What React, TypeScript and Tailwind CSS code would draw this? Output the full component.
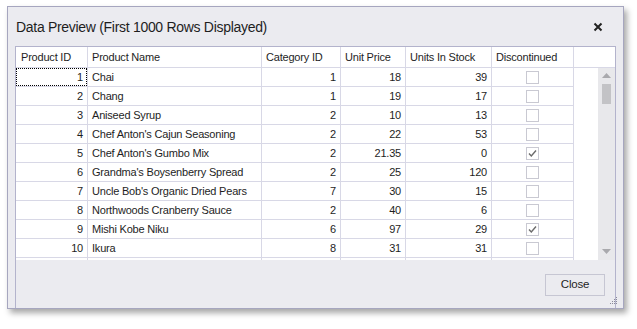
import React from "react";

type Row = { id: number; name: string; cat: number; price: string; stock: number; disc: boolean };

const rows: Row[] = [
  { id: 1, name: "Chai", cat: 1, price: "18", stock: 39, disc: false },
  { id: 2, name: "Chang", cat: 1, price: "19", stock: 17, disc: false },
  { id: 3, name: "Aniseed Syrup", cat: 2, price: "10", stock: 13, disc: false },
  { id: 4, name: "Chef Anton's Cajun Seasoning", cat: 2, price: "22", stock: 53, disc: false },
  { id: 5, name: "Chef Anton's Gumbo Mix", cat: 2, price: "21.35", stock: 0, disc: true },
  { id: 6, name: "Grandma's Boysenberry Spread", cat: 2, price: "25", stock: 120, disc: false },
  { id: 7, name: "Uncle Bob's Organic Dried Pears", cat: 7, price: "30", stock: 15, disc: false },
  { id: 8, name: "Northwoods Cranberry Sauce", cat: 2, price: "40", stock: 6, disc: false },
  { id: 9, name: "Mishi Kobe Niku", cat: 6, price: "97", stock: 29, disc: true },
  { id: 10, name: "Ikura", cat: 8, price: "31", stock: 31, disc: false },
];

function Check({ checked }: { checked: boolean }) {
  return (
    <div className="w-[13px] h-[13px] border border-[#c9c9d2] bg-white flex items-center justify-center">
      {checked && (
        <svg width="11" height="11" viewBox="0 0 11 11">
          <path d="M2 5.5 L4.3 8 L9 2.5" fill="none" stroke="#6b6b6b" strokeWidth="1.4" />
        </svg>
      )}
    </div>
  );
}

export default function App() {
  const cell = "h-full border-r border-[#d8d8e6] flex items-center shrink-0";
  return (
    <div
      className="w-[637px] h-[329px] bg-white pt-[6px] pl-[7px] text-[#1e1e1e]"
      style={{ fontFamily: "'Liberation Sans', Arial, sans-serif" }}
    >
      <div className="relative w-[617px] h-[303px] border border-[#a6a6bf] bg-[#ebebf0] flex flex-col shadow-[3px_4px_6px_rgba(0,0,0,0.35)]">
        {/* title bar */}
        <div className="h-[39px] shrink-0 flex items-center justify-between pl-[8px] pr-[20px]">
          <span className="text-[14px] tracking-[-0.3px] pt-[1px]">Data Preview (First 1000 Rows Displayed)</span>
          <svg width="10" height="10" viewBox="0 0 10 10" className="mt-[1px]">
            <path d="M1.5 1.5 L8.5 8.5 M8.5 1.5 L1.5 8.5" stroke="#222" strokeWidth="2" />
          </svg>
        </div>
        {/* inner panel */}
        <div className="flex-1 mx-[7px] border-x border-t border-[#b3b3cc] flex flex-col text-[11px] tracking-[-0.2px]">
          {/* grid */}
          <div className="h-[213px] bg-white flex flex-col overflow-hidden">
            {/* header */}
            <div className="h-[21px] shrink-0 flex border-b border-[#d8d8e6]">
              <div className={`${cell} w-[72px] pl-[5px]`}>Product ID</div>
              <div className={`${cell} w-[174px] pl-[4px]`}>Product Name</div>
              <div className={`${cell} w-[79px] pl-[4px]`}>Category ID</div>
              <div className={`${cell} w-[65px] pl-[4px]`}>Unit Price</div>
              <div className={`${cell} w-[86px] pl-[4px]`}>Units In Stock</div>
              <div className={`${cell} w-[82px] pl-[4px]`}>Discontinued</div>
              <div className="flex-1" />
            </div>
            <div className="flex-1 flex min-h-0">
              <div className="w-[558px] flex flex-col">
                {rows.map((r) => (
                  <div key={r.id} className="h-[19px] shrink-0 flex border-b border-[#d8d8e6]">
                    <div className={`${cell} w-[72px] justify-end pr-[4px] relative`}>
                      {r.id === 1 && (
                        <div className="absolute left-0 top-0 right-[0px] bottom-0 border border-dotted border-black" />
                      )}
                      {r.id}
                    </div>
                    <div className={`${cell} w-[174px] pl-[4px]`}>{r.name}</div>
                    <div className={`${cell} w-[79px] justify-end pr-[4px]`}>{r.cat}</div>
                    <div className={`${cell} w-[65px] justify-end pr-[4px]`}>{r.price}</div>
                    <div className={`${cell} w-[86px] justify-end pr-[4px]`}>{r.stock}</div>
                    <div className={`${cell} w-[82px] justify-center`}>
                      <Check checked={r.disc} />
                    </div>
                  </div>
                ))}
                <div className="h-[19px] shrink-0 flex">
                  <div className={`${cell} w-[72px]`} />
                  <div className={`${cell} w-[174px]`} />
                  <div className={`${cell} w-[79px]`} />
                  <div className={`${cell} w-[65px]`} />
                  <div className={`${cell} w-[86px]`} />
                  <div className={`${cell} w-[82px]`} />
                </div>
              </div>
              <div className="flex-1" />
              {/* scrollbar */}
              <div className="w-[17px] bg-[#e8e8eb] flex flex-col items-center">
                <svg width="9" height="5" viewBox="0 0 9 5" className="mt-[5px]">
                  <path d="M0 5 L4.5 0 L9 5 Z" fill="#a9a9ad" />
                </svg>
                <div className="mt-[6px] w-[9px] h-[20px] bg-[#c3c3c6]" />
                <div className="flex-1" />
                <svg width="9" height="5" viewBox="0 0 9 5" className="mb-[6px]">
                  <path d="M0 0 L9 0 L4.5 5 Z" fill="#a9a9ad" />
                </svg>
              </div>
            </div>
          </div>
          {/* footer */}
          <div className="flex-1 flex justify-end items-start pt-[14px] pr-[10px]">
            <button className="w-[60px] h-[22px] border border-[#c6c6d3] bg-[#ebebf0] text-[11.5px] text-[#1e1e1e] flex items-center justify-center">
              Close
            </button>
          </div>
        </div>
        {/* resize grip */}
        <svg width="8" height="8" viewBox="0 0 8 8" className="absolute right-[5px] bottom-[3px]">
          <rect x="6" y="0" width="1" height="1" fill="#8a8a9a" />
          <rect x="4" y="2" width="1" height="1" fill="#8a8a9a" />
          <rect x="6" y="2" width="1" height="1" fill="#8a8a9a" />
          <rect x="2" y="4" width="1" height="1" fill="#8a8a9a" />
          <rect x="4" y="4" width="1" height="1" fill="#8a8a9a" />
          <rect x="6" y="4" width="1" height="1" fill="#8a8a9a" />
          <rect x="0" y="6" width="1" height="1" fill="#8a8a9a" />
          <rect x="2" y="6" width="1" height="1" fill="#8a8a9a" />
          <rect x="4" y="6" width="1" height="1" fill="#8a8a9a" />
          <rect x="6" y="6" width="1" height="1" fill="#8a8a9a" />
        </svg>
      </div>
    </div>
  );
}
